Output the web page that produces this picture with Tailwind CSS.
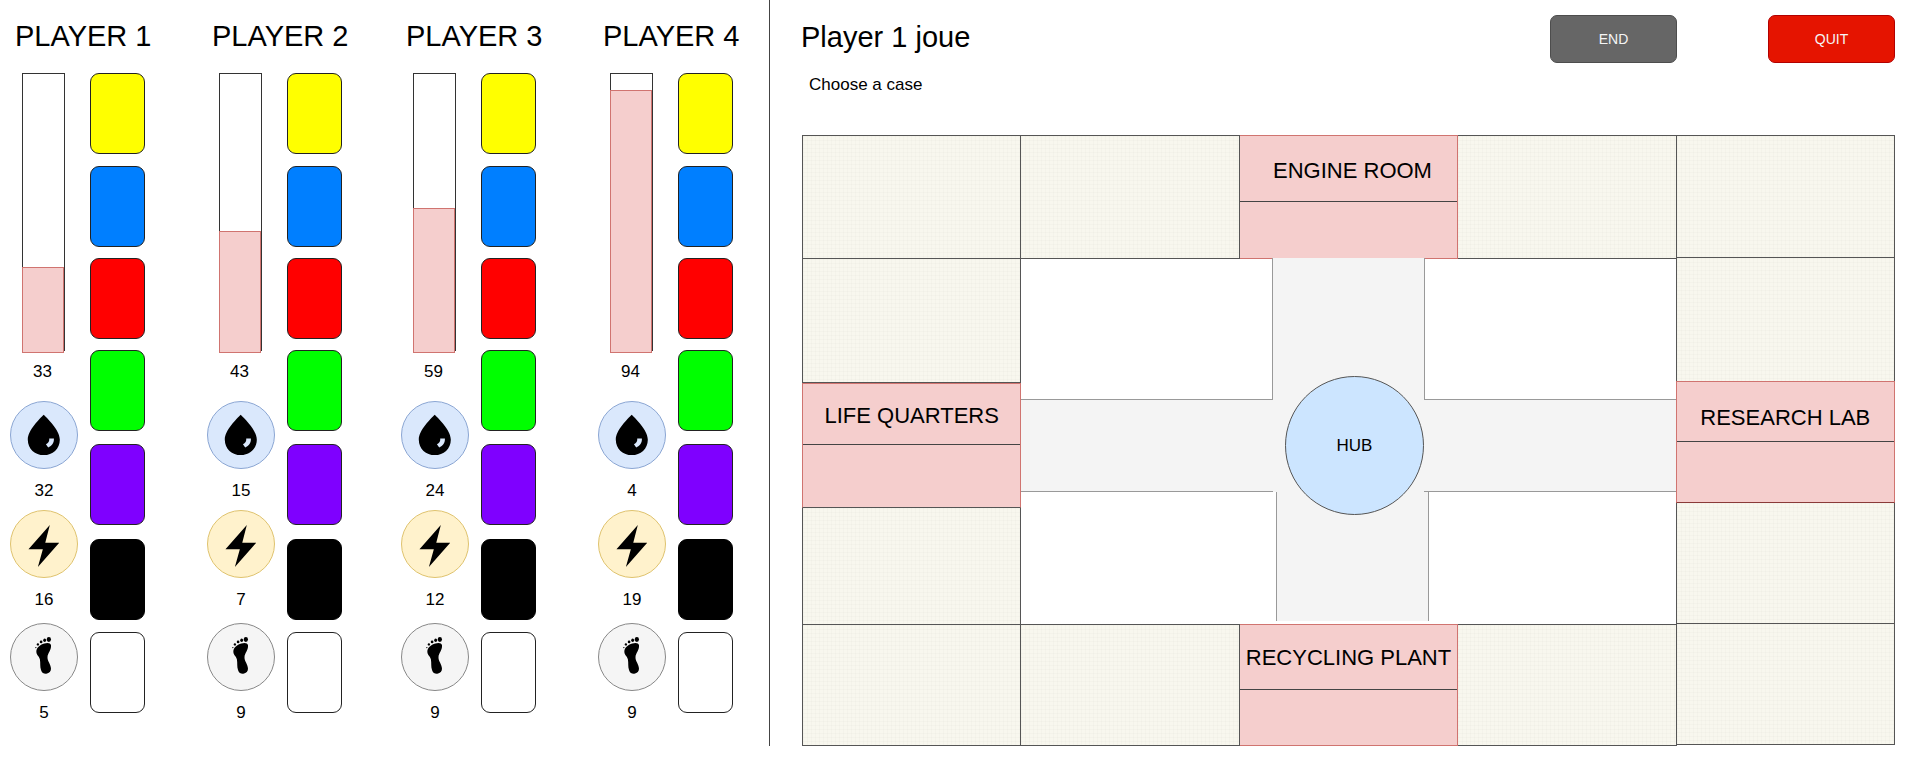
<!DOCTYPE html>
<html lang="en">
<head>
<meta charset="utf-8">
<meta name="viewport" content="width=device-width, initial-scale=1">
<title>Player 1 joue</title>
<script src="https://cdn.jsdelivr.net/npm/@tailwindcss/browser@4"></script>
</head>
<body class="bg-white text-black font-['Liberation_Sans',Arial,sans-serif] text-[17px] leading-6">

<svg class="hidden" aria-hidden="true">
  <symbol id="water" viewBox="0 0 68 68">
    <path d="M33.7 13.2C30 17 17.3 29 17.3 38.8C17.3 48.2 24.8 54.7 33.8 54.7C42.8 54.7 50.3 48.2 50.3 38.8C50.3 29 37.4 17 33.7 13.2Z"/>
    <path d="M39.4 37.6H44.2C44.5 41.8 42.2 45.2 38.3 46.9L36 43.6C38.5 42.4 39.7 40.4 39.4 37.6Z" fill="#dae8fc"/>
  </symbol>
  <symbol id="energy" viewBox="0 0 68 68">
    <path d="M40 14.3L35.3 32.7H49.7L27.7 57.7L32.8 39.4H18Z"/>
  </symbol>
  <symbol id="steps" viewBox="0 0 68 68">
    <ellipse cx="39" cy="16" rx="2.2" ry="2.5"/>
    <ellipse cx="34.7" cy="16.8" rx="1.5" ry="1.8"/>
    <circle cx="31" cy="18.5" r="1.4"/>
    <circle cx="27.7" cy="21" r="1.2"/>
    <circle cx="25.6" cy="24.3" r="0.7"/>
    <path d="M41.2 22C40.8 19.4 37.8 19 34.4 20C29.6 21.4 26 24.6 26.1 28.6C26.2 32.2 29.2 33.4 29.8 36.6C30.5 40.6 29.6 43.6 31 47.6C32 50.6 34 51.4 36.4 51.2C39.6 50.9 41.2 48.8 41.2 46.2C41.2 41.4 37.4 38.4 37.6 34.2C37.8 30 41.8 27 41.2 22Z"/>
  </symbol>
</svg>

<div class="grid grid-cols-[770fr_1147fr] items-start">
  <aside id="players" class="grid min-h-[746px] grid-cols-[197fr_194fr_197fr_171fr] border-r border-[#444] pt-4 pl-[10px]"></aside>

  <main class="pr-[22px] pl-8">
    <header class="flex items-start gap-[91px] pt-[15px]">
      <div class="-ml-px grow pt-px">
        <h1 class="text-[29px] leading-[42px]">Player 1 joue</h1>
        <p class="mt-[15px] pl-2">Choose a case</p>
      </div>
      <button type="button" class="h-[48px] w-[127px] rounded-[7px] border border-[#4d4d4d] bg-[#666] text-sm text-[#f5f5f5]">END</button>
      <button type="button" class="h-[48px] w-[127px] rounded-[7px] border border-[#b20000] bg-[#e51400] text-sm text-[#f5f5f5]">QUIT</button>
    </header>

    <section class="mt-[38px] grid grid-cols-5 items-start border-l border-[#555]">
      <div class="-ml-px flex flex-col">
        <div class="h-[124px] border border-[#555] bg-[#f8f7ee] bg-[linear-gradient(#00000004_1px,transparent_1px),linear-gradient(90deg,#00000004_1px,transparent_1px)] bg-[size:4px_4px]"></div>
        <div class="h-[124px] border border-t-0 border-[#555] bg-[#f8f7ee] bg-[linear-gradient(#00000004_1px,transparent_1px),linear-gradient(90deg,#00000004_1px,transparent_1px)] bg-[size:4px_4px]"></div>
        <div class="flex h-[125px] flex-col border border-[#d07470] border-b-[#555] bg-[#f5cecd] text-[22px]">
          <div class="flex h-[61px] items-center justify-center border-b border-[#444] pt-1">LIFE QUARTERS</div>
        </div>
        <div class="h-[117px] border border-t-0 border-[#555] bg-[#f8f7ee] bg-[linear-gradient(#00000004_1px,transparent_1px),linear-gradient(90deg,#00000004_1px,transparent_1px)] bg-[size:4px_4px]"></div>
        <div class="h-[121px] border border-t-0 border-[#555] bg-[#f8f7ee] bg-[linear-gradient(#00000004_1px,transparent_1px),linear-gradient(90deg,#00000004_1px,transparent_1px)] bg-[size:4px_4px]"></div>
      </div>

      <div class="col-span-3 flex flex-col">
        <div class="grid h-[124px] grid-cols-3">
          <div class="border border-l-0 border-[#555] bg-[#f8f7ee] bg-[linear-gradient(#00000004_1px,transparent_1px),linear-gradient(90deg,#00000004_1px,transparent_1px)] bg-[size:4px_4px]"></div>
          <div class="border border-l-0 border-[#d07470] bg-[#f5cecd] text-[22px]">
            <div class="flex h-[66px] items-center justify-center border-b border-[#444] pt-[5px] pl-2">ENGINE ROOM</div>
          </div>
          <div class="border border-l-0 border-[#555] bg-[#f8f7ee] bg-[linear-gradient(#00000004_1px,transparent_1px),linear-gradient(90deg,#00000004_1px,transparent_1px)] bg-[size:4px_4px]"></div>
        </div>

        <div class="h-[365px] border-r border-[#555]">
          <div class="relative mx-auto -mt-px h-[141px] w-[153px] border-x border-[#999] bg-[#f4f4f4]"></div>
          <div class="flex h-[93px]">
            <div class="grow border-y border-[#999] bg-[#f4f4f4]"></div>
            <div class="relative w-[151px] bg-[#f4f4f4]">
              <div class="absolute -top-[23px] left-3 z-10 flex size-[139px] items-center justify-center rounded-full border border-[#555] bg-[#cce5ff]">HUB</div>
            </div>
            <div class="grow border-y border-[#999] bg-[#f4f4f4]"></div>
          </div>
          <div class="pl-2">
            <div class="mx-auto h-[129px] w-[153px] border-x border-[#999] bg-[#f4f4f4]"></div>
          </div>
        </div>

        <div class="grid h-[122px] grid-cols-3">
          <div class="border border-l-0 border-[#555] bg-[#f8f7ee] bg-[linear-gradient(#00000004_1px,transparent_1px),linear-gradient(90deg,#00000004_1px,transparent_1px)] bg-[size:4px_4px]"></div>
          <div class="border border-l-0 border-[#d07470] bg-[#f5cecd] text-[22px]">
            <div class="flex h-[65px] items-center justify-center border-b border-[#444] pt-[2px]">RECYCLING PLANT</div>
          </div>
          <div class="border border-l-0 border-[#555] bg-[#f8f7ee] bg-[linear-gradient(#00000004_1px,transparent_1px),linear-gradient(90deg,#00000004_1px,transparent_1px)] bg-[size:4px_4px]"></div>
        </div>
      </div>

      <div class="flex flex-col">
        <div class="h-[123px] border border-l-0 border-[#555] bg-[#f8f7ee] bg-[linear-gradient(#00000004_1px,transparent_1px),linear-gradient(90deg,#00000004_1px,transparent_1px)] bg-[size:4px_4px]"></div>
        <div class="h-[123px] border-r border-[#555] bg-[#f8f7ee] bg-[linear-gradient(#00000004_1px,transparent_1px),linear-gradient(90deg,#00000004_1px,transparent_1px)] bg-[size:4px_4px]"></div>
        <div class="-ml-px h-[122px] border border-[#d07470] border-b-[#8a3a38] bg-[#f5cecd] text-[22px]">
          <div class="flex h-[60px] items-center justify-center border-b border-[#444] pt-[12px]">RESEARCH LAB</div>
        </div>
        <div class="h-[121px] border border-t-0 border-l-0 border-[#555] bg-[#f8f7ee] bg-[linear-gradient(#00000004_1px,transparent_1px),linear-gradient(90deg,#00000004_1px,transparent_1px)] bg-[size:4px_4px]"></div>
        <div class="h-[121px] border border-t-0 border-l-0 border-[#555] bg-[#f8f7ee] bg-[linear-gradient(#00000004_1px,transparent_1px),linear-gradient(90deg,#00000004_1px,transparent_1px)] bg-[size:4px_4px]"></div>
      </div>
    </section>
  </main>
</div>

<script>
  // level: height of the gauge fill in pixels
  const players = [
    { name: 'PLAYER 1', score: 33, level: 86, water: 32, energy: 16, steps: 5 },
    { name: 'PLAYER 2', score: 43, level: 122, water: 15, energy: 7, steps: 9 },
    { name: 'PLAYER 3', score: 59, level: 145, water: 24, energy: 12, steps: 9 },
    { name: 'PLAYER 4', score: 94, level: 263, water: 4, energy: 19, steps: 9 },
  ];
  document.getElementById('players').innerHTML = players.map(p => `
    <section>
      <h2 class="pl-[5px] text-[29px] leading-[40px] whitespace-nowrap">${p.name}</h2>
      <div class="mt-[17px] flex gap-3">
        <div class="flex w-[68px] flex-col items-center">
          <div class="relative ml-3 h-[278px] w-[43px] self-start border border-[#333]">
            <div class="absolute -bottom-[3px] -left-px w-[42px] border border-[#d07470] bg-[#f5cecd]" style="height:${p.level}px"></div>
          </div>
          <div class="mt-[9px] pr-[3px]">${p.score}</div>
          <svg class="mt-[17px] size-[68px] shrink-0 rounded-full border border-[#8ba6d3] bg-[#dae8fc]"><use href="#water"/></svg>
          <div class="mt-[10px]">${p.water}</div>
          <svg class="mt-[7px] size-[68px] shrink-0 rounded-full border border-[#dfc36e] bg-[#fff2cc]"><use href="#energy"/></svg>
          <div class="mt-[10px]">${p.energy}</div>
          <svg class="mt-[11px] size-[68px] shrink-0 rounded-full border border-[#888] bg-[#f5f5f5]"><use href="#steps"/></svg>
          <div class="mt-[10px]">${p.steps}</div>
        </div>
        <div class="flex w-[55px] flex-col">
          <div class="h-[81px] rounded-[9px] border border-[#222] bg-[#ffff00]"></div>
          <div class="mt-[12px] h-[81px] rounded-[9px] border border-[#222] bg-[#007fff]"></div>
          <div class="mt-[11px] h-[81px] rounded-[9px] border border-[#222] bg-[#ff0000]"></div>
          <div class="mt-[11px] h-[81px] rounded-[9px] border border-[#222] bg-[#00ff00]"></div>
          <div class="mt-[13px] h-[81px] rounded-[9px] border border-[#222] bg-[#7f00ff]"></div>
          <div class="mt-[14px] h-[81px] rounded-[9px] border border-black bg-black"></div>
          <div class="mt-[12px] h-[81px] rounded-[9px] border border-[#222] bg-white"></div>
        </div>
      </div>
    </section>`).join('');
</script>
</body>
</html>
